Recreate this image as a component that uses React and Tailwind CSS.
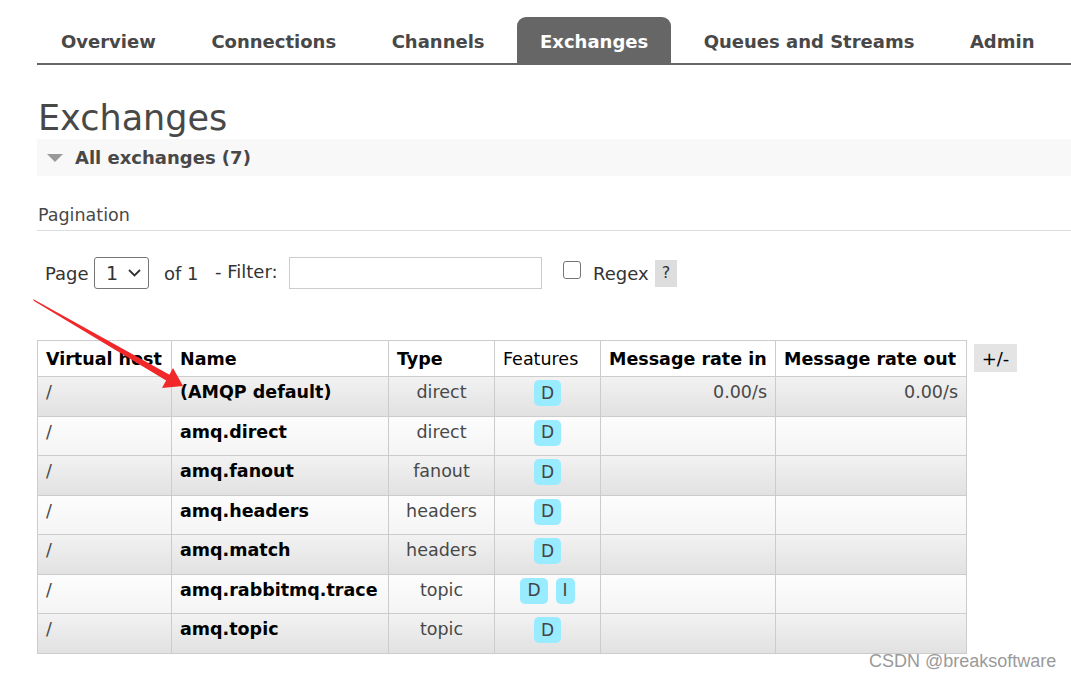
import React from 'react';

const tabs = ['Overview', 'Connections', 'Channels', 'Exchanges', 'Queues and Streams', 'Admin'];

const rows = [
    { name: '(AMQP default)', type: 'direct', features: ['D'], rin: '0.00/s', rout: '0.00/s' },
    { name: 'amq.direct', type: 'direct', features: ['D'] },
    { name: 'amq.fanout', type: 'fanout', features: ['D'] },
    { name: 'amq.headers', type: 'headers', features: ['D'] },
    { name: 'amq.match', type: 'headers', features: ['D'] },
    { name: 'amq.rabbitmq.trace', type: 'topic', features: ['D', 'I'] },
    { name: 'amq.topic', type: 'topic', features: ['D'] },
];

function Badge({ label }) {
    return (
        <span className="inline-flex items-center justify-center px-[7px] h-[26px] rounded-[5px] bg-[#99ebff] text-[#444] text-[17px] leading-none">
            {label}
        </span>
    );
}

export default function App() {
    return (
        <div className="relative w-[1071px] h-[676px] overflow-hidden bg-white text-[#484848]" style={{ fontFamily: '"DejaVu Sans", Verdana, sans-serif' }}>
            {/* tabs */}
            <div className="pt-[17px] pl-[38px]">
                <div className="flex gap-[9.5px] border-b-2 border-[#666] -ml-px pl-px h-[48px]">
                    {tabs.map((t) => (
                        <div
                            key={t}
                            className={
                                t === 'Exchanges'
                                    ? 'px-[23px] h-[47px] flex items-center pt-[2px] rounded-t-[9px] bg-[#666] text-white font-bold text-[18px]'
                                    : 'px-[23px] h-[47px] flex items-center pt-[2px] text-[#484848] font-bold text-[18px]'
                            }
                        >
                            {t}
                        </div>
                    ))}
                </div>
            </div>

            <h1 className="ml-[38px] mt-[32px] text-[35px] leading-[42px] text-[#484848]">Exchanges</h1>

            <div className="ml-[37px] h-[37px] bg-[#f8f8f8] flex items-center">
                <span className="ml-[10px] w-0 h-0 border-l-[8px] border-r-[8px] border-t-[8px] border-l-transparent border-r-transparent border-t-[#999]" />
                <span className="ml-[12px] font-bold text-[18px] text-[#484848]">All exchanges (7)</span>
            </div>

            <div className="ml-[37px] mt-[26px] pb-[2px] border-b border-[#ddd] text-[17.5px] pl-px">Pagination</div>

            <div className="ml-[45px] mt-[26px] flex items-center text-[18px] text-[#333]">
                <span className="w-[49px]">Page</span>
                <div className="w-[55px] h-[32px] border border-[#767676] rounded-[3px] flex items-center pl-[11px] text-[19px]">
                    <span>1</span>
                    <svg className="ml-[10px]" width="13" height="8" viewBox="0 0 13 8">
                        <path d="M1 1l5.5 5.5L12 1" fill="none" stroke="#333" strokeWidth="1.8" />
                    </svg>
                </div>
                <span className="ml-[15px] w-[51px]">of 1</span>
                <span className="w-[74px] -mt-[4px]">- Filter:</span>
                <div className="w-[253px] h-[32px] border border-[#ccc]" />
                <div className="ml-[21px] -mt-[7px] w-[18px] h-[18px] border border-[#767676] rounded-[3px]" />
                <span className="ml-[12px] w-[62px]">Regex</span>
                <span className="w-[22px] h-[27px] bg-[#ddd] flex items-center justify-center text-[16px]">?</span>
            </div>

            {/* table */}
            <div className="ml-[37px] mt-[51px] flex items-start">
                <table className="table-fixed border-collapse w-[929px] text-[17.5px]">
                    <colgroup>
                        <col className="w-[134px]" />
                        <col className="w-[217px]" />
                        <col className="w-[106px]" />
                        <col className="w-[106px]" />
                        <col className="w-[175px]" />
                        <col className="w-[191px]" />
                    </colgroup>
                    <thead>
                        <tr className="h-[36px] bg-white text-black">
                            <th className="border border-[#ccc] text-left font-bold pl-[8px] whitespace-nowrap">Virtual host</th>
                            <th className="border border-[#ccc] text-left font-bold pl-[8px]">Name</th>
                            <th className="border border-[#ccc] text-left font-bold pl-[8px]">Type</th>
                            <th className="border border-[#ccc] text-left font-normal pl-[8px]">Features</th>
                            <th className="border border-[#ccc] text-left font-bold pl-[8px] whitespace-nowrap">Message rate in</th>
                            <th className="border border-[#ccc] text-left font-bold pl-[8px] whitespace-nowrap">Message rate out</th>
                        </tr>
                    </thead>
                    <tbody>
                        {rows.map((r, i) => (
                            <tr
                                key={r.name}
                                className={
                                    i % 2 === 0
                                        ? 'h-[39.5px] bg-gradient-to-b from-[#f2f2f2] to-[#e1e1e1]'
                                        : 'h-[39.5px] bg-gradient-to-b from-[#fdfdfd] to-[#f4f4f4]'
                                }
                            >
                                <td className="border border-[#ccc] align-top pt-[2px] pl-[8px] text-[#484848]">/</td>
                                <td className="border border-[#ccc] align-top pt-[2px] pl-[8px] font-bold text-black whitespace-nowrap">{r.name}</td>
                                <td className="border border-[#ccc] align-top pt-[2px] text-center text-[#484848]">{r.type}</td>
                                <td className="border border-[#ccc] align-top pt-[3px] text-center">
                                    <div className="flex justify-center gap-[8px]">
                                        {r.features.map((f) => (
                                            <Badge key={f} label={f} />
                                        ))}
                                    </div>
                                </td>
                                <td className="border border-[#ccc] align-top pt-[2px] pr-[8px] text-right text-[#484848]">{r.rin}</td>
                                <td className="border border-[#ccc] align-top pt-[2px] pr-[8px] text-right text-[#484848]">{r.rout}</td>
                            </tr>
                        ))}
                    </tbody>
                </table>
                <span className="ml-[7px] mt-[4px] w-[43px] h-[28px] bg-[#e4e4e4] flex items-center justify-center text-[18px] text-black">+/-</span>
            </div>

            {/* red arrow annotation */}
            <svg className="absolute left-0 top-0 pointer-events-none" width="1071" height="676">
                <polygon points="33,299 34,301 167,381 170,375" fill="#f0282a" />
                <polygon points="183,386 162,388 173,368" fill="#f0282a" />
            </svg>

            <div className="absolute left-[869px] top-[648px] text-[18px] text-[#9a9a9a]" style={{ fontFamily: '"Liberation Sans", Arial, sans-serif' }}>
                CSDN @breaksoftware
            </div>
        </div>
    );
}
